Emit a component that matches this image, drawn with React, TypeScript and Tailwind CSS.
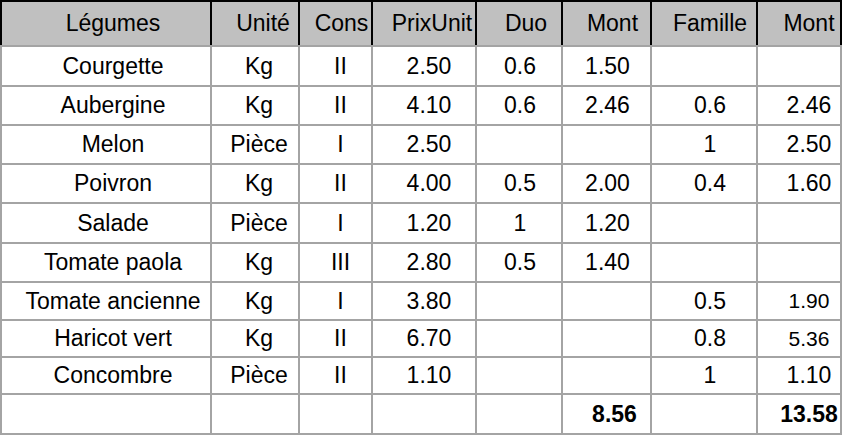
const COLS = [
  { w: "w-[210px]", body: "pl-[14px]", head: "pl-[14px]" },
  { w: "w-[88px]", body: "pl-[8px]", head: "pl-[16px]" },
  { w: "w-[73px]", body: "pl-[10px]", head: "pl-[12px]" },
  { w: "w-[104px]", body: "pl-[10px]", head: "pl-[16px]" },
  { w: "w-[86px]", body: "pl-[2px]", head: "pl-[14px]" },
  { w: "w-[89px]", body: "pl-[2px]", head: "pl-[12px]" },
  { w: "w-[106px]", body: "pl-[12px]", head: "pl-[12px]" },
  { w: "w-[86px]", body: "pl-[20px]", head: "pl-[20px]" },
];

const HEAD = ["Légumes", "Unité", "Cons", "PrixUnit", "Duo", "Mont", "Famille", "Mont"];

type Row = { h: string; cells: string[]; small?: boolean; bold?: boolean };

const ROWS: Row[] = [
  { h: "h-[38px]", cells: ["Courgette", "Kg", "II", "2.50", "0.6", "1.50", "", ""] },
  { h: "h-[37px]", cells: ["Aubergine", "Kg", "II", "4.10", "0.6", "2.46", "0.6", "2.46"] },
  { h: "h-[37px]", cells: ["Melon", "Pièce", "I", "2.50", "", "", "1", "2.50"] },
  { h: "h-[37px]", cells: ["Poivron", "Kg", "II", "4.00", "0.5", "2.00", "0.4", "1.60"] },
  { h: "h-[38px]", cells: ["Salade", "Pièce", "I", "1.20", "1", "1.20", "", ""] },
  { h: "h-[37px]", cells: ["Tomate paola", "Kg", "III", "2.80", "0.5", "1.40", "", ""] },
  { h: "h-[36px]", cells: ["Tomate ancienne", "Kg", "I", "3.80", "", "", "0.5", "1.90"], small: true },
  { h: "h-[35px]", cells: ["Haricot vert", "Kg", "II", "6.70", "", "", "0.8", "5.36"], small: true },
  { h: "h-[35px]", cells: ["Concombre", "Pièce", "II", "1.10", "", "", "1", "1.10"] },
  { h: "h-[38px]", cells: ["", "", "", "", "", "8.56", "", "13.58"], bold: true },
];

export default function App() {
  return (
    <div className="w-[844px] h-[436px] bg-white font-['Liberation_Sans',Arial,sans-serif] text-black">
      <div className="flex w-[842px] h-[47px] bg-[#c0c0c0] border-t-2 border-t-black border-b-2 border-b-[#a4a4a4]">
        {HEAD.map((t, i) => (
          <div
            key={i}
            className={`${COLS[i].w} ${COLS[i].head} flex items-center justify-center border-l-2 border-black text-[23px] ${
              i === 7 ? "border-r-2" : ""
            }`}
          >
            {t}
          </div>
        ))}
      </div>
      {ROWS.map((r, ri) => (
        <div key={ri} className={`flex w-[842px] box-content ${r.h} border-b-2 border-[#a4a4a4]`}>
          {r.cells.map((c, i) => (
            <div
              key={i}
              className={`${COLS[i].w} ${r.bold && i === 5 ? "pl-[16px]" : COLS[i].body} flex items-center justify-center border-l-2 border-[#a4a4a4] ${
                i === 7 ? "border-r-2" : ""
              } ${r.small && i === 7 ? "text-[21px]" : "text-[23px]"} ${r.bold ? "font-bold" : ""}`}
            >
              {c}
            </div>
          ))}
        </div>
      ))}
    </div>
  );
}
